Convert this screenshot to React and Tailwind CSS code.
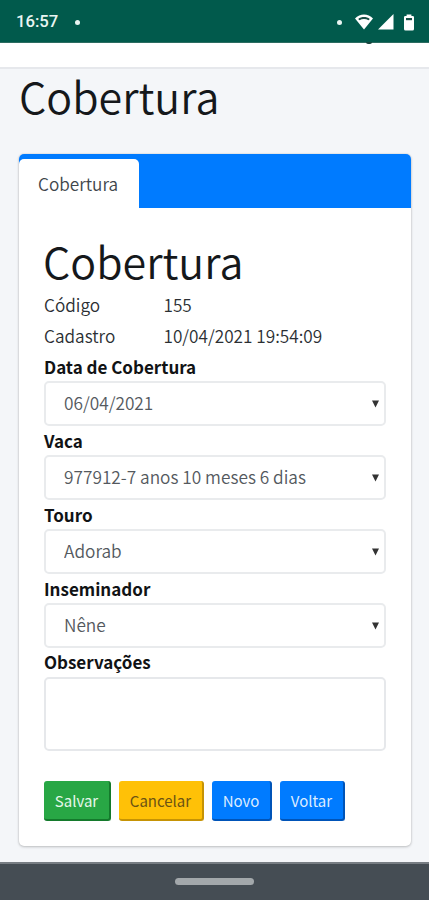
import React from 'react';

const fields = [
  { label: 'Data de Cobertura', value: '06/04/2021' },
  { label: 'Vaca', value: '977912-7 anos 10 meses 6 dias' },
  { label: 'Touro', value: 'Adorab' },
  { label: 'Inseminador', value: 'Nêne' }
];

const buttons = [
  { label: 'Salvar', style: 'w-[67px] bg-[#28a745] text-[#e6f7ea] border-[#147a2c]' },
  { label: 'Cancelar', style: 'w-[85px] bg-[#ffc107] text-[#6b5314] border-[#c69304]' },
  { label: 'Novo', style: 'w-[60px] bg-[#007bff] text-[#dcecff] border-[#0054b8]' },
  { label: 'Voltar', style: 'w-[65px] bg-[#007bff] text-[#dcecff] border-[#0054b8]' }
];

const StatusBar = () => (
  <div className="h-[43px] shrink-0 bg-[#015a4c] border-b border-[#2c6c61] flex items-center justify-between pl-4 pr-[15px] text-[#e9f5f2]">
    <div className="flex items-center gap-[17px] pt-[2px]">
      <span className="font-['Roboto',sans-serif] font-medium text-[16.7px] leading-5">16:57</span>
      <span className="size-[5px] rounded-full bg-[#e9f5f2]" />
    </div>
    <div className="flex items-center pt-[2px]">
      <span className="size-[5px] rounded-full bg-[#e9f5f2] mr-[13px]" />
      {/* Wifi */}
      <svg className="mr-[5px]" width="18" height="16" viewBox="0 0 18 16">
        <path d="M0 4.4C5 -0.8 13 -0.8 18 4.4L9 15.5Z" fill="#fff" />
        <path d="M3.2 4.9C6.6 2.4 11.4 2.4 14.8 4.9L13.5 6.3C10.8 4.6 7.2 4.6 4.5 6.3Z" fill="#174f46" />
      </svg>
      {/* Signal */}
      <svg className="mr-[10px]" width="16" height="16" viewBox="0 0 16 16">
        <path d="M15.5 0V15.5H0Z" fill="#fff" />
      </svg>
      {/* Battery */}
      <svg width="10" height="17" viewBox="0 0 10 17">
        <path d="M2.6 0.5h4.8v1.6h1.4q1.2 0 1.2 1.2V15q0 1.5-1.5 1.5h-7Q0 16.5 0 15V3.3q0-1.2 1.2-1.2h1.4z" fill="#fff" />
        <rect x="2" y="4" width="6" height="2.2" fill="#174f46" />
      </svg>
    </div>
  </div>
);

const SelectField = ({ label, value }) => (
  <div className="flex flex-col h-[73.9px]">
    <label className="h-[28px] text-[17px] leading-[27px] font-bold text-[#111315]">{label}</label>
    <div className="relative">
      <select
        defaultValue={value}
        className="block appearance-none w-full h-[45px] pl-[18px] pb-px border-2 border-[#e9ebed] rounded-[5px] bg-white font-[350] text-[17.25px] text-[#54595e]"
      >
        <option>{value}</option>
      </select>
      <svg className="absolute right-[7px] top-[19px]" width="7" height="8" viewBox="0 0 7 8">
        <path d="M0 0.5H7L3.5 7.5Z" fill="#333" />
      </svg>
    </div>
  </div>
);

const App = () => {
  return (
    <div className="w-full h-[900px] flex flex-col overflow-hidden bg-[#f4f6f9] font-['Noto_Sans_CJK_SC','Open_Sans',sans-serif] text-[#15181b]">
      <StatusBar />

      {/* Navbar, scrolled under the status bar */}
      <div className="relative h-[26px] shrink-0 bg-white border-b-2 border-[#e6e8ec]">
        <span className="absolute left-[366px] -top-px w-[6px] h-[2px] rounded-b-full bg-[#17443d]" />
      </div>

      <h1 className="pl-[19px] h-[85px] text-[43px] leading-[52px] font-[350]">Cobertura</h1>

      <div className="mx-[19px] mr-[18px] h-[692px] shrink-0 rounded-[5px] bg-white shadow-[0_0_2px_rgba(0,0,0,0.14),0_1px_3px_rgba(0,0,0,0.2)] overflow-hidden">
        <div className="h-[54px] bg-[#007bff] pt-[5px]">
          <div className="h-[49px] w-[120px] rounded-t-[5px] bg-white pl-[19px] font-[350] text-[17.2px] leading-[49px] text-[#40464b]">
            Cobertura
          </div>
        </div>

        <div className="px-[25px] pt-[26px]">
          <h2 className="-ml-px h-[55px] text-[43px] leading-[52px] font-[350]">Cobertura</h2>

          <div className="grid grid-cols-[119.5px_1fr] font-[350] text-[17.2px] leading-[31px] text-[#2b2f33]">
            <span>Código</span>
            <span>155</span>
            <span>Cadastro</span>
            <span>10/04/2021 19:54:09</span>
          </div>

          <div className="pt-[2px]">
            {fields.map((field) => (
              <SelectField key={field.label} label={field.label} value={field.value} />
            ))}
          </div>

          <label className="block h-[28px] text-[17px] leading-[26px] font-bold text-[#111315]">Observações</label>
          <textarea className="block w-full h-[74px] resize-none border-2 border-[#e6e8eb] rounded-[5px] bg-white" />

          <div className="flex gap-[8px] mt-[30px]">
            {buttons.map((button) => (
              <button
                key={button.label}
                className={`h-[40px] pt-px rounded-[3px] border-r-2 border-b-2 text-[15px] leading-[38px] ${button.style}`}
              >
                {button.label}
              </button>
            ))}
          </div>
        </div>
      </div>

      {/* Android navigation bar */}
      <div className="mt-auto h-[38px] shrink-0 bg-[#454d54] border-t-2 border-[#777d83] flex justify-center">
        <span className="mt-[14px] w-[79px] h-[7px] rounded-full bg-[#a3a8ab]" />
      </div>
    </div>
  );
};

export default App;
